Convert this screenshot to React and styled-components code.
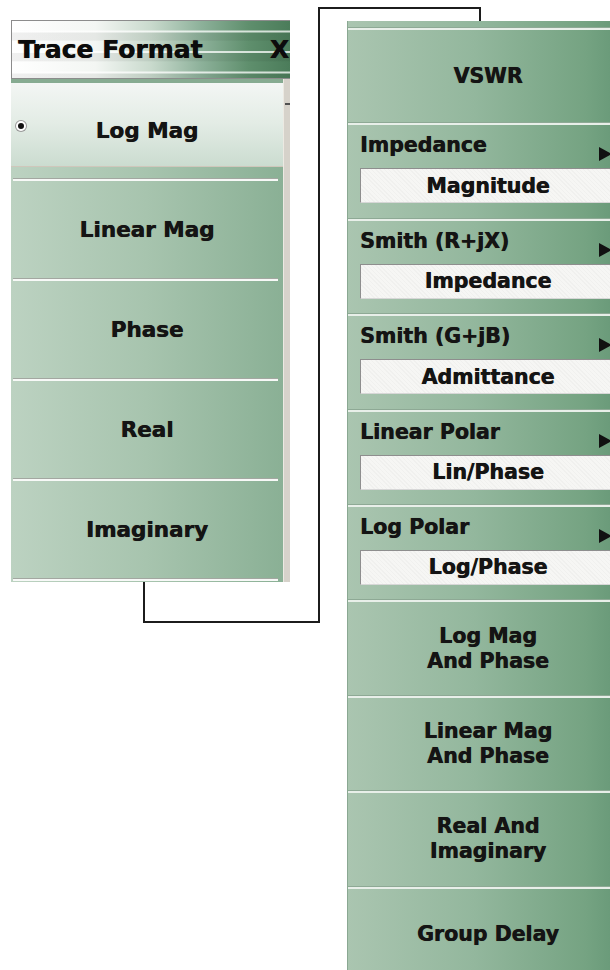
import styled, { createGlobalStyle } from 'styled-components'

const GlobalStyle = createGlobalStyle`
  html, body {
    margin: 0;
    padding: 0;
    background: #ffffff;
    overflow: hidden;
  }
  body {
    font-family: 'DejaVu Sans', Verdana, sans-serif;
    color: #141414;
  }
`

const heavy = `text-shadow: 0.45px 0 0 #161616, 0 0 1px rgba(110, 70, 20, 0.35);`

const Page = styled.div`
  position: relative;
  width: 610px;
  height: 970px;
  display: flex;
  align-items: flex-start;
  padding-left: 11px;
  box-sizing: border-box;
`

const Connector = styled.svg`
  position: absolute;
  left: 0;
  top: 0;
  width: 610px;
  height: 970px;
  pointer-events: none;
`

const LeftPanel = styled.div`
  margin-top: 20px;
  width: 279px;
  flex-shrink: 0;
  display: flex;
  flex-direction: column;
`

const Header = styled.div`
  height: 57px;
  display: flex;
  align-items: center;
  justify-content: space-between;
  overflow: hidden;
  padding-left: 6px;
  border: 1px solid #8c8c8c;
  border-right: none;
  font-size: 25px;
  font-weight: bold;
  color: #0c0c0c;
  ${heavy}
  background:
    repeating-linear-gradient(
      180deg,
      rgba(255, 255, 255, 0) 0px,
      rgba(255, 255, 255, 0) 9px,
      rgba(255, 255, 255, 0.75) 10px,
      rgba(255, 255, 255, 0.75) 11px,
      rgba(0, 0, 0, 0.06) 12px,
      rgba(0, 0, 0, 0.06) 19px,
      rgba(255, 255, 255, 0) 20.5px
    ),
    linear-gradient(90deg, #ffffff 0%, #f3f6f3 30%, #c9dacd 50%, #8db19a 68%, #5f8f6d 85%, #4b7c5a 100%);
`

const Close = styled.span`
  margin-right: 1px;
`

const Body = styled.div`
  display: flex;
  height: 503px;
`

const ItemList = styled.div`
  width: 272px;
  display: flex;
  flex-direction: column;
  border-top: 4px solid #86ab91;
  background: linear-gradient(90deg, #bcd2c1 0%, #a7c4ae 50%, #8ab095 100%);
`

const ScrollStrip = styled.div`
  position: relative;
  width: 6px;
  border-left: 1px solid #ece9e2;
  background: #d6d2ca;

  &::before {
    content: '';
    position: absolute;
    left: 1px;
    right: 0;
    top: 24px;
    height: 2px;
    background: #505050;
  }
`

const LeftItem = styled.div`
  position: relative;
  height: ${p => p.$h}px;
  display: flex;
  align-items: center;
  justify-content: center;
  font-size: 21.5px;
  font-weight: bold;
  ${heavy}
  background: ${p =>
    p.$selected
      ? `linear-gradient(180deg, #f3f6f4 0px, #e3ece5 40px, #cbdcd0 83px, #cfc7bb 83px, #cfc7bb 84px, transparent 84px)`
      : 'transparent'};
`

const Radio = styled.span`
  position: absolute;
  left: 5px;
  top: 38px;
  width: 6px;
  height: 6px;
  border-radius: 50%;
  background: #111;
  border: 2px solid #ffffff;
  box-shadow: 0 0 0 1px #9a9a9a;
`

const LeftSeparator = styled.div`
  height: 2px;
  margin: 0 5px 0 2px;
  border-top: 1px solid #a3a7a1;
  background: #f7f9f7;
  flex-shrink: 0;
`

const RightPanel = styled.div`
  margin-left: 57px;
  margin-top: 21px;
  width: 280px;
  height: 960px;
  flex-shrink: 0;
  display: flex;
  flex-direction: column;
  border-left: 1px solid #8aa892;
  background: linear-gradient(90deg, #aac5b0 0%, #93b79d 45%, #75a382 85%, #639574 100%);
`

const TopPad = styled.div`
  height: 6px;
  flex-shrink: 0;
`

const RightSeparator = styled.div`
  height: 2px;
  flex-shrink: 0;
  border-top: 1px solid #8ea995;
  background: #e8efe9;
`

const Item = styled.div`
  height: 92.4px;
  flex-shrink: 0;
  display: flex;
  align-items: center;
  justify-content: center;
  text-align: center;
  font-size: 20.5px;
  line-height: 25px;
  font-weight: bold;
  ${heavy}
`

const SubItem = styled.div`
  height: 92.4px;
  flex-shrink: 0;
  display: flex;
  flex-direction: column;
  padding-top: 9px;
  box-sizing: border-box;
  font-size: 20.5px;
  font-weight: bold;
  ${heavy}
`

const LabelRow = styled.div`
  display: flex;
  align-items: flex-end;
  justify-content: space-between;
  padding-left: 12px;
  line-height: 22px;
`

const Arrow = styled.span`
  width: 0;
  height: 0;
  margin-right: 16px;
  margin-bottom: -5px;
  border-top: 7px solid transparent;
  border-bottom: 7px solid transparent;
  border-left: 13px solid #111;
`

const ValueBox = styled.div`
  margin: 12px 12px 0 12px;
  height: 33px;
  display: flex;
  align-items: center;
  justify-content: center;
  border-top: 1px solid #8e8e8e;
  border-left: 1px solid #8e8e8e;
  border-bottom: 1px solid #d7d7d7;
  border-right: 1px solid #d7d7d7;
  background:
    repeating-linear-gradient(45deg, rgba(0, 0, 0, 0.025) 0 1px, transparent 1px 3px),
    #f6f6f4;
`

const leftItems = ['Linear Mag', 'Phase', 'Real', 'Imaginary']

const rightItems = [
  { type: 'plain', label: 'VSWR' },
  { type: 'sub', label: 'Impedance', value: 'Magnitude' },
  { type: 'sub', label: 'Smith (R+jX)', value: 'Impedance' },
  { type: 'sub', label: 'Smith (G+jB)', value: 'Admittance' },
  { type: 'sub', label: 'Linear Polar', value: 'Lin/Phase' },
  { type: 'sub', label: 'Log Polar', value: 'Log/Phase' },
  { type: 'plain', label: ['Log Mag', 'And Phase'] },
  { type: 'plain', label: ['Linear Mag', 'And Phase'] },
  { type: 'plain', label: ['Real And', 'Imaginary'] },
  { type: 'plain', label: 'Group Delay' },
]

const Lines = ({ lines }) =>
  Array.isArray(lines) ? (
    <span>
      {lines[0]}
      <br />
      {lines[1]}
    </span>
  ) : (
    lines
  )

export default function App() {
  return (
    <>
      <GlobalStyle />
      <Page>
        <Connector viewBox="0 0 610 970">
          <polyline
            points="144,582 144,622 319,622 319,8 480,8 480,21"
            fill="none"
            stroke="#1c1c1c"
            strokeWidth="2"
          />
        </Connector>

        <LeftPanel>
          <Header>
            <span>Trace Format</span>
            <Close>X</Close>
          </Header>
          <Body>
            <ItemList>
              <LeftItem $h={95} $selected>
                <Radio />
                Log Mag
              </LeftItem>
              {leftItems.map(label => (
                <div key={label}>
                  <LeftSeparator />
                  <LeftItem $h={97}>{label}</LeftItem>
                </div>
              ))}
              <LeftSeparator />
            </ItemList>
            <ScrollStrip />
          </Body>
        </LeftPanel>

        <RightPanel>
          <TopPad />
          {rightItems.map((it, i) => (
            <div key={i}>
              <RightSeparator />
              {it.type === 'plain' ? (
                <Item>
                  <Lines lines={it.label} />
                </Item>
              ) : (
                <SubItem>
                  <LabelRow>
                    <span>{it.label}</span>
                    <Arrow />
                  </LabelRow>
                  <ValueBox>{it.value}</ValueBox>
                </SubItem>
              )}
            </div>
          ))}
        </RightPanel>
      </Page>
    </>
  )
}
